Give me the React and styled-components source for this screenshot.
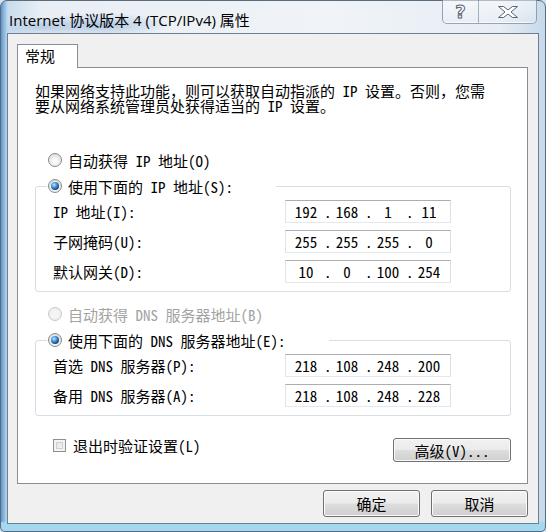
import React from "react";
import styled, { createGlobalStyle } from "styled-components";

const BODY_FONT = `"Noto Sans Mono CJK SC", "Noto Sans CJK SC", monospace`;
const TITLE_FONT = `"Segoe UI", "Open Sans", "Noto Sans CJK SC", sans-serif`;

const GlobalStyle = createGlobalStyle`
  html, body { margin: 0; padding: 0; background: #cfe2f1; }
  body { width: 546px; height: 532px; overflow: hidden; }
  * { box-sizing: border-box; }
`;

const Window = styled.div`
  width: 546px;
  height: 532px;
  display: flex;
  flex-direction: column;
  padding: 0 6px 7px 6px;
  border: 1px solid #5a6b7c;
  border-radius: 7px 7px 5px 5px;
  background:
    radial-gradient(ellipse 70px 12px at 100px 24px, rgba(70, 125, 190, 0.35), rgba(70, 125, 190, 0)),
    radial-gradient(ellipse 40px 10px at 40px 26px, rgba(70, 125, 190, 0.25), rgba(70, 125, 190, 0)),
    linear-gradient(to bottom, rgba(163, 216, 241, 0) 0, rgba(163, 216, 241, 0) 520px, #a3d8f1 522px),
    linear-gradient(90deg, #5f93c8 0, #8ab9e2 3px, #c9dced 7px, #e8eef4 40px, #f0f4f8 60%, #e6edf4 92%, #c6d9ea 100%);
`;

const TitleBar = styled.div`
  height: 32px;
  display: flex;
  align-items: flex-start;
  flex-shrink: 0;
`;

const Title = styled.div`
  margin: 9px 0 0 2px;
  font-family: ${TITLE_FONT};
  font-size: 15px;
  line-height: 20px;
  color: #000;
  white-space: nowrap;
`;

const CaptionGroup = styled.div`
  margin-left: auto;
  margin-right: 2px;
  margin-top: -1px;
  display: flex;
  height: 24px;
  border: 1px solid rgba(80, 95, 115, 0.55);
  border-top: none;
  border-radius: 0 0 5px 5px;
  background: linear-gradient(to bottom, rgba(255, 255, 255, 0.55), rgba(235, 240, 246, 0.35));
  box-shadow: inset 0 -1px 0 rgba(255, 255, 255, 0.7);
`;

const CaptionButton = styled.div`
  width: ${(p) => p.$w}px;
  display: flex;
  align-items: center;
  justify-content: center;
  & + & {
    border-left: 1px solid rgba(80, 95, 115, 0.45);
  }
`;

const HelpGlyph = styled.span`
  font-family: "DejaVu Sans", sans-serif;
  font-weight: bold;
  font-size: 18px;
  line-height: 18px;
  color: #fff;
  -webkit-text-stroke: 1px #58636f;
`;

const Client = styled.div`
  flex: 1;
  display: flex;
  flex-direction: column;
  border: 1px solid #6f7f8f;
  background: #f0f0f0;
  padding: 10px 0 0 9px;
  font-family: ${BODY_FONT};
  font-size: 15px;
  color: #000;
`;

const TabStrip = styled.div`
  display: flex;
`;

const Tab = styled.div`
  position: relative;
  z-index: 1;
  width: 61px;
  height: 24px;
  margin-bottom: -1px;
  padding-left: 7px;
  border: 1px solid #898c95;
  border-bottom: none;
  background: #fff;
  line-height: 22px;
`;

const Panel = styled.div`
  width: 511px;
  height: 417px;
  border: 1px solid #898c95;
  background: #fff;
  padding: 15px 16px 0 17px;
  display: flex;
  flex-direction: column;
`;

const Description = styled.p`
  margin: 0;
  line-height: 15px;
  white-space: nowrap;
  span {
    display: block;
  }
`;

const RadioRow = styled.div`
  display: flex;
  align-items: center;
  height: 18px;
  margin-top: ${(p) => p.$mt || 0}px;
  margin-left: 13px;
  gap: 6px;
  color: ${(p) => (p.$disabled ? "#a3a3a3" : "#000")};
  white-space: nowrap;
`;

const RadioCircle = styled.span`
  width: 14px;
  height: 14px;
  flex-shrink: 0;
  border-radius: 50%;
  border: 1px solid ${(p) => (p.$disabled ? "#c8c8c8" : "#8a8a8a")};
  background: ${(p) =>
    p.$disabled
      ? "radial-gradient(circle at 50% 50%, #f4f4f4 0, #f4f4f4 40%, #e6e6e6 100%)"
      : "radial-gradient(circle at 50% 60%, #ffffff 0, #f2f2f2 40%, #cfcfcf 100%)"};
  display: flex;
  align-items: center;
  justify-content: center;
  &::after {
    content: "";
    display: ${(p) => (p.$checked ? "block" : "none")};
    width: 8px;
    height: 8px;
    border-radius: 50%;
    background: radial-gradient(circle at 38% 35%, #c9ecff 0, #5aa6e6 28%, #1f5a9c 62%, #0f2f5c 85%, #3a78bb 100%);
  }
`;

const Group = styled.fieldset`
  margin: 8px 0 0 0;
  padding: 0;
  min-width: 0;
  border: 1px solid #d5dfe5;
  border-radius: 3px;
`;

const Legend = styled.legend`
  padding: 0 0 0 1px;
  margin-left: 11px;
  width: ${(p) => p.$w}px;
  height: 18px;
  display: flex;
  align-items: center;
  gap: 6px;
  white-space: nowrap;
`;

const FieldGrid = styled.div`
  display: grid;
  grid-template-columns: 232px 166px;
  row-gap: 7px;
  align-items: center;
  padding: 5px 0 8px 17px;
`;

const FieldLabel = styled.span`
  white-space: nowrap;
`;

const IpBox = styled.div`
  width: 166px;
  height: 23px;
  display: flex;
  align-items: center;
  padding-left: 2px;
  border: 1px solid;
  border-color: #abadb3 #dbdfe6 #e3e9ef #e2e3ea;
  background: #fff;
  font-size: 15px;
`;

const Octet = styled.span`
  width: 36px;
  text-align: center;
`;

const Dot = styled.span`
  width: 5px;
  text-align: center;
`;

const BottomRow = styled.div`
  margin-top: 22px;
  display: flex;
  align-items: flex-start;
  justify-content: space-between;
`;

const CheckRow = styled.div`
  display: flex;
  align-items: center;
  gap: 7px;
  margin-left: 18px;
  height: 15px;
  white-space: nowrap;
`;

const CheckBox = styled.span`
  width: 13px;
  height: 13px;
  border: 1px solid #8e8f8f;
  background: linear-gradient(135deg, #d9d9d9 0, #ececec 50%, #f8f8f8 100%);
  box-shadow: inset 0 0 0 2px #f3f3f3, inset 0 0 0 3px #d0d0d0;
`;

const Button = styled.button`
  width: ${(p) => p.$w}px;
  height: ${(p) => p.$h}px;
  padding: 0;
  border: 1px solid #707070;
  border-radius: 3px;
  background: linear-gradient(to bottom, #f2f2f2 0%, #ebebeb 48%, #dddddd 52%, #cfcfcf 100%);
  box-shadow: inset 0 0 0 1px #fbfbfb;
  font-family: ${BODY_FONT};
  font-size: 15px;
  color: #000;
  letter-spacing: ${(p) => (p.$spaced ? "0" : "0")};
`;

const ButtonRow = styled.div`
  display: flex;
  justify-content: flex-end;
  gap: 11px;
  margin: 6px 10px 0 0;
`;

function CloseGlyph() {
  return (
    <svg width="24" height="14" viewBox="0 0 24 14">
      <path
        d="M2.5 1.5 H7.5 L12 5 L16.5 1.5 H21.5 L15 7 L21.5 12.5 H16.5 L12 9 L7.5 12.5 H2.5 L9 7 Z"
        fill="#fff"
        stroke="#5b6571"
        strokeWidth="1"
        strokeLinejoin="round"
      />
    </svg>
  );
}

function Radio({ checked, disabled, children, mt }) {
  return (
    <RadioRow $disabled={disabled} $mt={mt}>
      <RadioCircle $checked={checked} $disabled={disabled} />
      <span>{children}</span>
    </RadioRow>
  );
}

function IpField({ value }) {
  const parts = value.split(".");
  return (
    <IpBox>
      {parts.map((p, i) => (
        <React.Fragment key={i}>
          {i > 0 && <Dot>.</Dot>}
          <Octet>{p}</Octet>
        </React.Fragment>
      ))}
    </IpBox>
  );
}

const ipRows = [
  ["IP 地址(I):", "192.168.1.11"],
  ["子网掩码(U):", "255.255.255.0"],
  ["默认网关(D):", "10.0.100.254"],
];

const dnsRows = [
  ["首选 DNS 服务器(P):", "218.108.248.200"],
  ["备用 DNS 服务器(A):", "218.108.248.228"],
];

export default function App() {
  return (
    <>
      <GlobalStyle />
      <Window>
        <TitleBar>
          <Title>Internet 协议版本 4 (TCP/IPv4) 属性</Title>
          <CaptionGroup>
            <CaptionButton $w={35}>
              <HelpGlyph>?</HelpGlyph>
            </CaptionButton>
            <CaptionButton $w={58}>
              <CloseGlyph />
            </CaptionButton>
          </CaptionGroup>
        </TitleBar>
        <Client>
          <TabStrip>
            <Tab>常规</Tab>
          </TabStrip>
          <Panel>
            <Description>
              <span>如果网络支持此功能，则可以获取自动指派的 IP 设置。否则，您需</span>
              <span>要从网络系统管理员处获得适当的 IP 设置。</span>
            </Description>
            <Radio mt={38}>自动获得 IP 地址(O)</Radio>
            <Group>
              <Legend $w={229}>
                <RadioCircle $checked />
                <span>使用下面的 IP 地址(S):</span>
              </Legend>
              <FieldGrid>
                {ipRows.map(([label, ip]) => (
                  <React.Fragment key={label}>
                    <FieldLabel>{label}</FieldLabel>
                    <IpField value={ip} />
                  </React.Fragment>
                ))}
              </FieldGrid>
            </Group>
            <Radio disabled mt={13}>
              自动获得 DNS 服务器地址(B)
            </Radio>
            <Group>
              <Legend $w={282}>
                <RadioCircle $checked />
                <span>使用下面的 DNS 服务器地址(E):</span>
              </Legend>
              <FieldGrid>
                {dnsRows.map(([label, ip]) => (
                  <React.Fragment key={label}>
                    <FieldLabel>{label}</FieldLabel>
                    <IpField value={ip} />
                  </React.Fragment>
                ))}
              </FieldGrid>
            </Group>
            <BottomRow>
              <CheckRow>
                <CheckBox />
                <span>退出时验证设置(L)</span>
              </CheckRow>
              <Button $w={118} $h={24}>高级(V)...</Button>
            </BottomRow>
          </Panel>
          <ButtonRow>
            <Button $w={97} $h={27}>确定</Button>
            <Button $w={97} $h={27}>取消</Button>
          </ButtonRow>
        </Client>
      </Window>
    </>
  );
}
